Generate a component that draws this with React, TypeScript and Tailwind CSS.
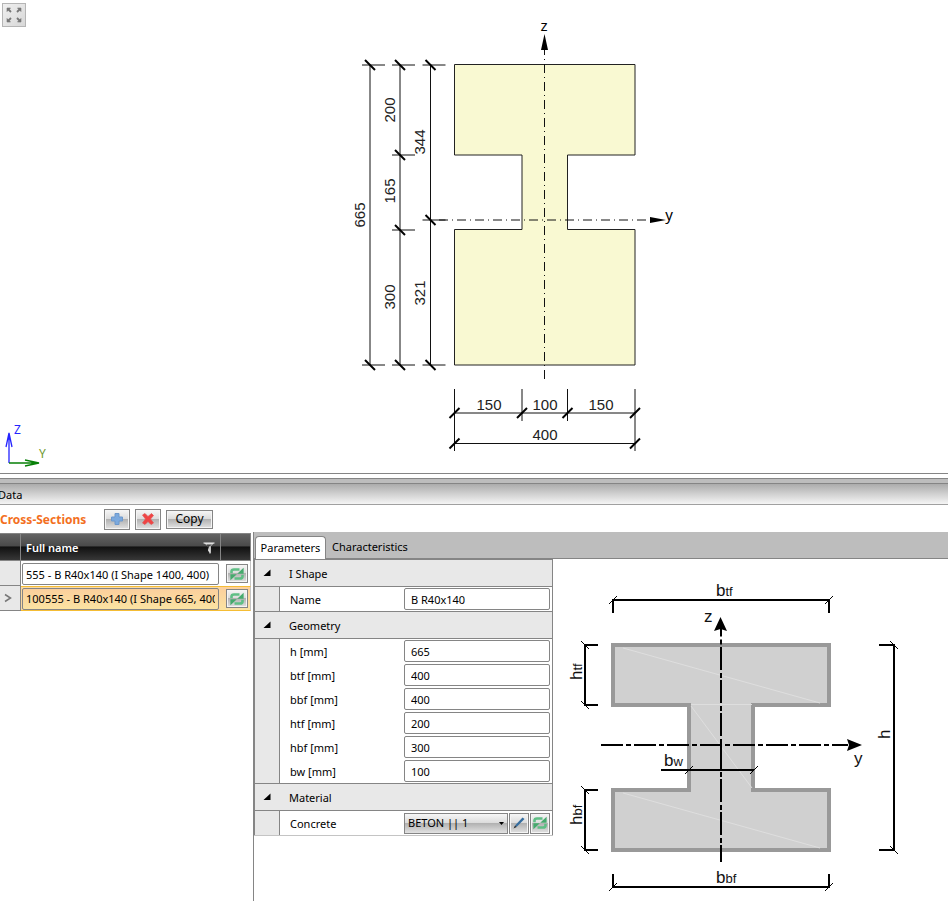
import React from "react";

const glossy =
  "flex items-center justify-center border border-[#858585] bg-[linear-gradient(#f6f6f6_0%,#dcdcdc_46%,#b2b2b2_50%,#e2e2e2_100%)] shadow-[inset_0_0_0_1px_#f4f4f4]";

const RefreshIcon = () => (
  <svg width="16" height="14" viewBox="0 0 16 14" aria-hidden="true">
    <path d="M2.5 6.2V4.6Q2.5 2.5 5 2.5H10.5" fill="none" stroke="#5fbf85" strokeWidth="2.6" />
    <path d="M14.6 0.8V6.8H8.2Z" fill="#45aa6d" />
    <path d="M13.5 7.8V9.4Q13.5 11.5 11 11.5H5.5" fill="none" stroke="#5fbf85" strokeWidth="2.6" />
    <path d="M1.4 13.2V7.2H7.8Z" fill="#45aa6d" />
  </svg>
);

const slashes = (points: number[][], dir: number, size = 5, width = 2) =>
  points.map(([x, y], i) => (
    <line
      key={i}
      x1={x - size}
      y1={y - size * dir}
      x2={x + size}
      y2={y + size * dir}
      stroke="#000"
      strokeWidth={width}
    />
  ));

const verticalDims = [
  { x: 370, stops: [65, 365] },
  { x: 400, stops: [65, 155, 230, 365] },
  { x: 430.5, stops: [65, 220, 365] },
];

const verticalLabels: [string, number, number][] = [
  ["665", 365, 215],
  ["200", 395, 110],
  ["165", 395, 191],
  ["300", 395, 297],
  ["344", 425, 142],
  ["321", 425, 293],
];

function SectionDrawing() {
  return (
    <svg
      className="h-full min-w-0 flex-1 font-['Liberation_Sans',Arial,sans-serif]"
      viewBox="60 0 888 473"
      preserveAspectRatio="xMinYMin meet"
      role="img"
      aria-label="Cross-section"
    >
      <path
        d="M454.5 64.5H635V155H567.5V229.5H635V365H454.5V229.5H522V155H454.5Z"
        fill="#f9f9d2"
        stroke="#222"
      />
      <g stroke="#111" strokeWidth="1" fill="none">
        <path d="M544.5 46V380M439 220H650" strokeDasharray="9 4 1 4" />
        {verticalDims.map(({ x, stops }) => (
          <g key={x}>
            <line x1={x} x2={x} y1={65} y2={365} />
            {stops.map((y) => (
              <line key={y} x1={x - 8} x2={x + 15} y1={y} y2={y} />
            ))}
          </g>
        ))}
        <path d="M454.5 389V451M635 389V451M522 389V421M567.5 389V421M454.5 413H635M454.5 443.5H635" />
      </g>
      {verticalDims.map(({ x, stops }) => (
        <g key={x}>{slashes(stops.map((y) => [x, y]), 1)}</g>
      ))}
      {slashes([[454.5, 413], [522, 413], [567.5, 413], [635, 413], [454.5, 443.5], [635, 443.5]], -1)}
      <path d="M544.5 34L548 50H541ZM666 220L650 217V223Z" fill="#000" />
      <g fontSize="15" textAnchor="middle" fill="#222">
        <text x="489" y="410">150</text>
        <text x="545" y="410">100</text>
        <text x="601" y="410">150</text>
        <text x="545" y="440">400</text>
        {verticalLabels.map(([t, x, y]) => (
          <text key={t} transform={`translate(${x} ${y}) rotate(-90)`}>{t}</text>
        ))}
      </g>
      <g fontSize="15" textAnchor="middle" className="font-['Noto_Sans',sans-serif]">
        <text x="544" y="31">z</text>
        <text x="669" y="220">y</text>
      </g>
    </svg>
  );
}

function ShapeLegend() {
  return (
    <svg
      className="h-[342px] min-w-0 flex-1 font-['Liberation_Sans',Arial,sans-serif]"
      viewBox="553 559 395 342"
      preserveAspectRatio="xMinYMin meet"
      role="img"
      aria-label="I shape dimensions"
    >
      <path
        d="M613 645H829V705H753V790H829V850H613V790H689V705H613Z"
        fill="#d0d0d0"
        stroke="#999"
        strokeWidth="4"
      />
      <path d="M623 648L820 703M691 706L752 788M691 704.5H752M623 793L820 848" stroke="#dedede" fill="none" />
      <g stroke="#000" strokeWidth="2" fill="none">
        <path d="M613 613V600H829V613M613 874V887H829V874" />
        <path d="M598 645H585V705H598M598 790H585V850H598" />
        <path d="M879 645H894V850H879" />
        <path d="M661 770H754" />
        <path d="M721 628V636.5M721 639.5V644.5" />
        <path d="M721 647V862" strokeDasharray="23 3 5 2" />
        <path d="M601 745H848" strokeDasharray="22 3 5 3" />
      </g>
      {slashes([[613, 600], [829, 600], [613, 887], [829, 887], [689, 770], [754, 770]], -1, 4, 1)}
      {slashes([[585, 645], [585, 705], [585, 790], [585, 850], [894, 645], [894, 850]], 1, 4, 1)}
      <path d="M720.5 617L727 631L720.5 629L714 631ZM862 745L847 739L849 745L847 751Z" fill="#000" />
      <g fontSize="17" fill="#111">
        <text x="716" y="596">b<tspan fontSize="13">tf</tspan></text>
        <text x="716" y="883">b<tspan fontSize="13">bf</tspan></text>
        <text x="664" y="766">b<tspan fontSize="13">w</tspan></text>
        <text x="704" y="622">z</text>
        <text x="854" y="764">y</text>
        <text transform="translate(582 680) rotate(-90)">h<tspan fontSize="13">tf</tspan></text>
        <text transform="translate(582 825) rotate(-90)">h<tspan fontSize="13">bf</tspan></text>
        <text transform="translate(890 739) rotate(-90)">h</text>
      </g>
    </svg>
  );
}

function GroupHeader({ title }: { title: string }) {
  return (
    <h3 className="flex h-7 items-center border-y border-[#858585] bg-[#e8e8e8] pl-2">
      <svg width="8" height="8" viewBox="0 0 8 8" className="mr-[18px]" aria-hidden="true">
        <path d="M7.5 0.5V7H0.5Z" fill="#000" />
      </svg>
      <span className="pt-px">{title}</span>
    </h3>
  );
}

function Row({ id, label, children }: { id: string; label: string; children: React.ReactNode }) {
  return (
    <div className="flex h-6 items-center">
      <div className="h-full w-[25px] shrink-0 border-r border-[#858585] bg-[#e8e8e8]" />
      <label htmlFor={id} className="flex-1 pt-px pl-2.5">{label}</label>
      <div className="mr-0.5 flex w-[146px] gap-px">{children}</div>
    </div>
  );
}

function Field({ id, label, value }: { id: string; label: string; value: string }) {
  return (
    <Row id={id} label={label}>
      <input
        id={id}
        defaultValue={value}
        className="h-[22px] w-full rounded-xs border border-[#858585] bg-white px-1.5 outline-none"
      />
    </Row>
  );
}

const geometry = [
  ["h", "665"],
  ["btf", "400"],
  ["bbf", "400"],
  ["htf", "200"],
  ["hbf", "300"],
  ["bw", "100"],
];

const sections = [
  { name: "555 - B R40x140 (I Shape 1400, 400)", selected: false },
  { name: "100555 - B R40x140 (I Shape 665, 400)", selected: true },
];

function SectionsTable() {
  return (
    <table className="w-[251px] shrink-0 table-fixed border-separate border-spacing-0 self-start">
      <colgroup>
        <col className="w-[21px]" />
        <col className="w-[199px]" />
        <col className="w-[31px]" />
      </colgroup>
      <thead>
        <tr className="h-7 bg-[linear-gradient(#666_0%,#4a4a4a_46%,#111_50%,#3a3a3a_100%)] text-left text-white">
          <th className="border border-l-0 border-[#858585]" aria-label="Current row" />
          <th className="border-y border-[#858585] px-[5px] font-semibold">
            <span className="flex items-center justify-between pt-px">
              Full name
              <svg width="12" height="12" viewBox="0 0 12 12" aria-label="Filter">
                <path d="M1 1H11L7.5 4.5V11L5 9V4.5Z" fill="#ccc" />
                <path d="M3.5 2.5H9L6.5 4.5V8.5" fill="#444" />
                <path d="M0.5 1H11.5M7 4.5V11.5" stroke="#f2f2f2" strokeWidth="1.2" fill="none" />
              </svg>
            </span>
          </th>
          <th className="border border-[#858585]" aria-label="Update" />
        </tr>
      </thead>
      <tbody>
        {sections.map((s) => (
          <tr key={s.name} className="h-[25px]">
            <td className="border-r border-b border-[#858585] bg-[#e8e8e8] p-0">
              {s.selected && (
                <svg width="8" height="10" viewBox="0 0 8 10" className="ml-1" aria-hidden="true">
                  <path d="M1 1.5L6.5 5L1 8.5" fill="none" stroke="#777" strokeWidth="1.5" />
                </svg>
              )}
            </td>
            <td className={s.selected ? "border-y border-[#f5bd35] bg-[#fbd9a2] p-0" : "p-0 pt-px"}>
              <input
                aria-label="Full name"
                defaultValue={s.name}
                className={
                  s.selected
                    ? "ml-px block h-[22px] w-[197px] rounded-xs border border-[#858585] bg-[linear-gradient(#fbcf9c,#fbe3a2)] px-[3px] outline-none"
                    : "ml-px block h-[22px] w-[197px] rounded-xs border border-[#858585] bg-white px-[3px] outline-none"
                }
              />
            </td>
            <td
              className={
                s.selected
                  ? "border-y border-r border-y-[#f5bd35] border-r-[#c4c4c4] bg-[linear-gradient(#fbcf9c,#fbe3a2)] p-0"
                  : "border-r border-r-[#c4c4c4] p-0"
              }
            >
              <button aria-label="Update" className={`${glossy} ml-1.5 h-[19px] w-[22px]`}>
                <RefreshIcon />
              </button>
            </td>
          </tr>
        ))}
      </tbody>
    </table>
  );
}

export default function App() {
  return (
    <main className="flex min-h-screen flex-col overflow-hidden bg-white font-['Noto_Sans','Open_Sans',sans-serif] text-[11px] leading-4 text-black">
      <section className="flex h-[473px]">
        <div className="flex w-[60px] shrink-0 flex-col justify-between pt-[3px] pb-1 pl-0.5">
          <button
            aria-label="Zoom to fit"
            className="flex size-6 items-center justify-center border border-[#b5b5b5] bg-[linear-gradient(135deg,#f0f0f0,#d8d8d8)]"
          >
            <svg width="18" height="18" viewBox="0 0 18 18" fill="#777" stroke="#777" aria-hidden="true">
              <path d="M2 2H5.5L2 5.5ZM16 2H12.5L16 5.5ZM2 16H5.5L2 12.5ZM16 16H12.5L16 12.5Z" strokeWidth="0.6" />
              <path d="M3 3L6 6M15 3L12 6M3 15L6 12M15 15L12 12" strokeWidth="1.8" />
            </svg>
          </button>
          <svg width="52" height="48" viewBox="2 421 52 48" fill="none" aria-label="Axes Z and Y">
            <path d="M9 463V433M6 447L9 433L12 447" stroke="#2424ff" strokeWidth="1.3" />
            <path d="M9 463H39M25 460L39 463L25 466" stroke="#078007" strokeWidth="1.3" />
            <text x="14" y="434" fontSize="12" fill="#2424ff">Z</text>
            <text x="39" y="458" fontSize="12" fill="#6f9a30">Y</text>
          </svg>
        </div>
        <SectionDrawing />
      </section>
      <div className="h-[5px] border-t border-[#858585]" />
      <div className="h-[6px] border-y border-[#858585] bg-[#bdbdbd]" />
      <h1 className="-ml-1 flex h-[21px] items-center border-b border-[#a0a0a0] bg-[linear-gradient(#acacac,#f5f5f5)] pt-px pl-0.5">
        Data
      </h1>
      <div className="flex h-7 items-center">
        <h2 className="w-[104px] pt-px text-[12px] font-bold text-[#f36f21]">Cross-Sections</h2>
        <button aria-label="Add" className={`${glossy} h-[21px] w-[26px]`}>
          <svg width="14" height="14" viewBox="0 0 14 14" aria-hidden="true">
            <path d="M5 1.5H9V5H12.5V9H9V12.5H5V9H1.5V5H5Z" fill="#7ba9de" stroke="#6d98cc" />
          </svg>
        </button>
        <button aria-label="Delete" className={`${glossy} ml-[5px] h-[21px] w-[26px]`}>
          <svg width="14" height="14" viewBox="0 0 14 14" aria-hidden="true">
            <path
              d="M1.5 3L4 1.5L7 4.5L10.5 1.5L12.5 3.5L9.5 7L12.5 11L10 12.5L7 9.5L4 12.5L1.5 11L4.5 7Z"
              fill="#ef4444"
              stroke="#e25050"
              strokeWidth="0.7"
            />
          </svg>
        </button>
        <button className={`${glossy} ml-[5px] h-[19px] w-[47px] text-[12px]`}>Copy</button>
      </div>
      <div className="flex flex-1">
        <SectionsTable />
        <section className="-mt-px ml-0.5 min-w-0 flex-1 border-l border-[#858585]">
          <div role="tablist" className="flex h-[27px] items-end border-b border-[#858585] bg-[#bdbdbd] pl-px">
            <button
              role="tab"
              aria-selected="true"
              className="-mb-px h-[23px] w-[71px] rounded-t-sm border border-b-0 border-[#858585] bg-white"
            >
              Parameters
            </button>
            <button role="tab" aria-selected="false" className="h-[22px] px-1.5">
              Characteristics
            </button>
          </div>
          <div className="flex items-start">
            <form className="w-[299px] shrink-0 border-b border-[#c4c4c4]">
              <div className="border-x border-[#858585]">
                <GroupHeader title="I Shape" />
                <Field id="name" label="Name" value="B R40x140" />
                <GroupHeader title="Geometry" />
                {geometry.map(([k, v]) => (
                  <Field key={k} id={k} label={`${k} [mm]`} value={v} />
                ))}
                <GroupHeader title="Material" />
                <Row id="concrete" label="Concrete">
                  <div className="relative flex-1">
                    <select
                      id="concrete"
                      className="h-[21px] w-full appearance-none border border-[#858585] bg-[linear-gradient(#f6f6f6_0%,#dcdcdc_46%,#b2b2b2_50%,#e2e2e2_100%)] pl-[3px] outline-none"
                    >
                      <option>BETON || 1</option>
                    </select>
                    <svg
                      width="5"
                      height="3"
                      viewBox="0 0 5 3"
                      className="pointer-events-none absolute top-[9px] right-1"
                      aria-hidden="true"
                    >
                      <path d="M0 0H5L2.5 3Z" />
                    </svg>
                  </div>
                  <button type="button" aria-label="Edit" className={`${glossy} h-[21px] w-5`}>
                    <svg width="14" height="14" viewBox="0 0 14 14" aria-hidden="true">
                      <path d="M2.5 11.5L3.5 9L10.5 1.5L12.5 3L5 10.5Z" fill="#356d9f" />
                      <path d="M1.5 12.5L3 9.5L4.7 11Z" fill="#333" />
                    </svg>
                  </button>
                  <button type="button" aria-label="Update material" className={`${glossy} h-[21px] w-5`}>
                    <RefreshIcon />
                  </button>
                </Row>
              </div>
            </form>
            <ShapeLegend />
          </div>
        </section>
      </div>
    </main>
  );
}
